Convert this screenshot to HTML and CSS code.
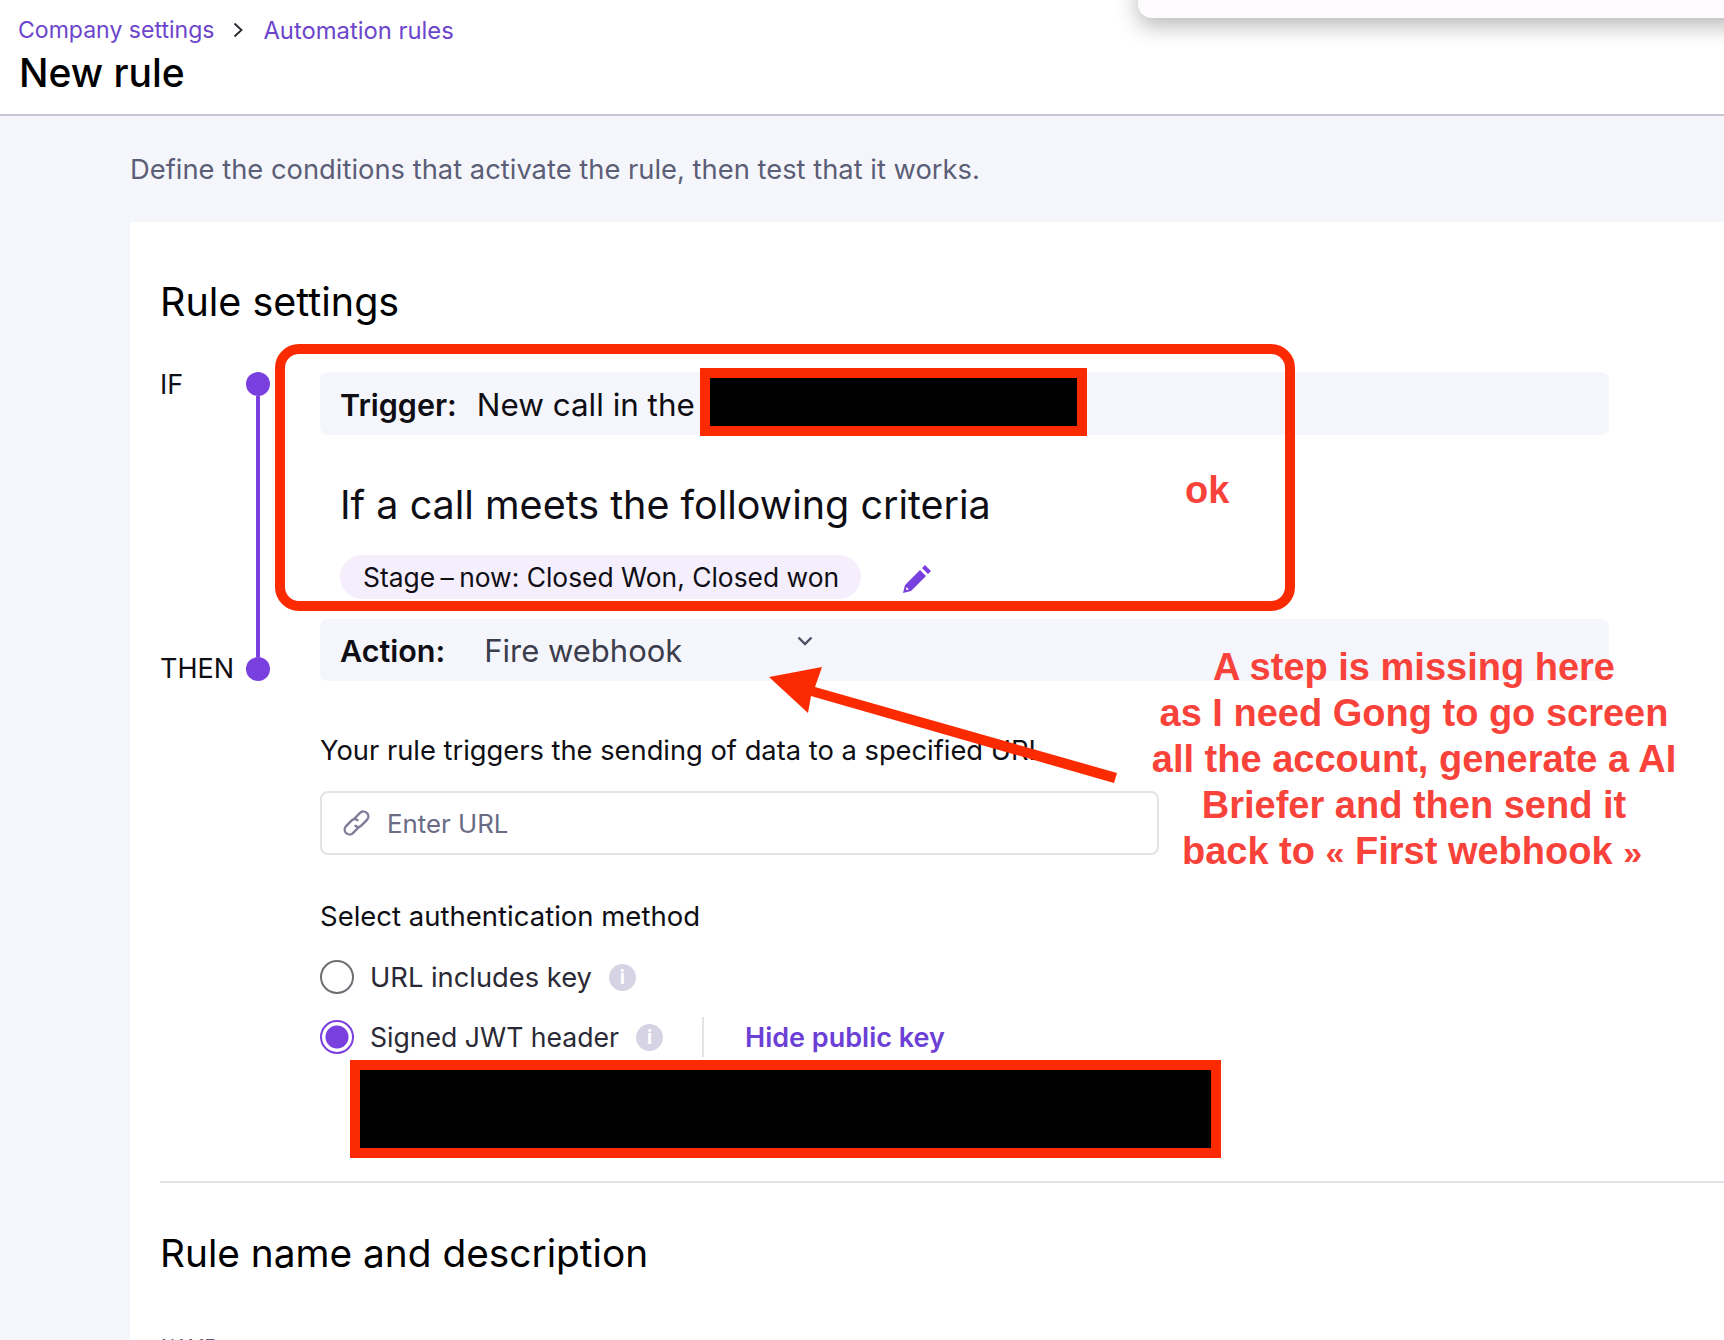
FILE: index.html
```html
<!DOCTYPE html>
<html lang="en">
<head>
<meta charset="utf-8">
<title>New rule</title>
<link rel="stylesheet" href="styles.css">
</head>
<body>
<div class="page">
  <header class="topbar">
    <nav class="crumbs">
      <a class="crumb">Company settings</a>
      <svg class="crumb-sep" viewBox="0 0 12 16" aria-hidden="true"><path d="M2.5 1.5 9.5 8l-7 6.5" fill="none" stroke="#26262e" stroke-width="1.8"/></svg>
      <a class="crumb crumb-current">Automation rules</a>
    </nav>
    <h1 class="page-title">New rule</h1>
  </header>
  <main class="content">
    <p class="intro">Define the conditions that activate the rule, then test that it works.</p>
    <section class="card">
      <h2 class="section-title">Rule settings</h2>
      <div class="rule">
        <div class="timeline">
          <div class="tl-row"><span class="tl-label">IF</span><span class="tl-dot"></span></div>
          <div class="tl-line"></div>
          <div class="tl-row"><span class="tl-label">THEN</span><span class="tl-dot"></span></div>
        </div>
        <div class="rule-body">
          <div class="bar"><b class="bar-key">Trigger:</b><span class="bar-value">New call in the</span></div>
          <h3 class="criteria-title">If a call meets the following criteria</h3>
          <div class="criteria">
            <span class="pill"><span>Stage<span class="dash"> – </span>now: Closed Won, Closed won</span></span>
            <svg class="pencil" viewBox="0 0 28 28" aria-hidden="true"><path d="M22 0 28 6 25 9 19 3ZM17 5 23 11 8 26 0 28 2 20ZM3.500 22 3 25 6 24.500Z" fill="#7a3fdf" fill-rule="evenodd"/></svg>
          </div>
          <div class="bar action"><b class="bar-key">Action:</b><span class="action-value">Fire webhook</span>
            <svg class="chevron" viewBox="0 0 16 10" aria-hidden="true"><path d="M1.500 1.500 8 8l6.500-6.500" fill="none" stroke="#4c5068" stroke-width="2.400"/></svg>
          </div>
          <p class="field-label">Your rule triggers the sending of data to a specified URL</p>
          <div class="url-input">
            <svg class="link-icon" viewBox="0 0 27 26" aria-hidden="true"><g fill="none" stroke="#7f7b99" stroke-width="2.400" stroke-linecap="round"><path d="M11 9 17.300 2.700a4.900 4.900 0 0 1 6.900 6.900L18 15.800a4 4 0 0 1-5.500 0"/><path d="M16 17 9.700 23.300a4.900 4.900 0 0 1-6.900-6.900L9 10.200a4 4 0 0 1 5.500 0"/></g></svg>
            <span class="placeholder">Enter URL</span>
          </div>
          <p class="auth-label">Select authentication method</p>
          <div class="radio-row">
            <span class="radio"></span><span class="radio-text">URL includes key</span><span class="info">i</span>
          </div>
          <div class="radio-row second">
            <span class="radio checked"></span><span class="radio-text">Signed JWT header</span><span class="info">i</span>
            <span class="vsep"></span><a class="hide-key">Hide public key</a>
          </div>
          <div class="key-redact"></div>
        </div>
      </div>
      <hr class="divider">
      <h2 class="section-title lower">Rule name and description</h2>
      <div class="name-label">NAME</div>
    </section>
  </main>
  <div class="popup"></div>
  <div class="redact-trigger"></div>
  <div class="callout-box"></div>
  <div class="note-ok">ok</div>
  <div class="note-step">A step is missing here<br>as I need Gong to go screen<br>all the account, generate a AI<br>Briefer and then send it<br>back to <span class="quote">«</span> First webhook <span class="quote quote-end">»</span></div>
  <svg class="arrow" viewBox="0 0 1724 1340" aria-hidden="true"><path d="M769 677 822 667 815 687 1117 773 1114 783 811 696 808 713Z" fill="#fc2a00"/></svg>
</div>
</body>
</html>
```
FILE: styles.css
```css
* { box-sizing: border-box; }
html, body { margin: 0; height: 100%; }
body { font-family: Inter, "Noto Sans", sans-serif; color: #0e0e14; background: #f5f6fb; overflow: hidden; }
.page { position: relative; width: 1724px; height: 1340px; overflow: hidden; }

.topbar { height: 116px; background: #fff; border-bottom: 2px solid #cbc4d2; padding: 15px 0 0 18px; }
.crumbs { display: flex; align-items: center; height: 30px; }
.crumb { font-size: 23.050px; color: #6c45cc; }
.crumb-current { font-size: 23.800px; }
.crumb-sep { width: 12px; height: 16px; margin: 0 19px 0 18px; }
.page-title { margin: 5px 0 0 1px; font-size: 39px; line-height: 46px; font-weight: 500; color: #000; }

.content { padding: 0 0 0 130px; }
.intro { margin: 0; padding-top: 38px; height: 106px; font-size: 27.350px; line-height: 32px; color: #5b5e76; }
.card { background: #fff; height: 1200px; padding: 55px 0 0 30px; }
.section-title { margin: 0; font-size: 39.500px; line-height: 50px; font-weight: 400; color: #000; }
.section-title.lower { margin-top: 45px; font-size: 38.800px; }

.rule { display: flex; margin-top: 45px; }
.timeline { width: 160px; flex: none; display: flex; flex-direction: column; }
.tl-row { display: flex; justify-content: space-between; align-items: center; width: 110px; height: 24px; }
.tl-label { font-size: 27px; line-height: 24px; }
.tl-row:first-child .tl-label { padding-top: 2px; }
.tl-dot { width: 24px; height: 24px; border-radius: 50%; background: #7a3fdf; }
.tl-line { width: 4px; height: 261px; margin-left: 96px; background: #7a3fdf; }

.rule-body { width: 1289px; }
.bar { display: flex; align-items: center; height: 63px; padding: 2px 0 0 20px; background: #f5f6fb; border-radius: 8px; font-size: 30.500px; }
.bar-key { font-weight: 600; }
.bar-value { margin-left: 20px; font-size: 31.400px; }
.criteria-title { margin: 45px 0 0 20px; font-size: 39.500px; line-height: 50px; font-weight: 400; }
.criteria { display: flex; align-items: center; margin: 25px 0 0 20px; height: 44px; }
.pill { display: flex; align-items: center; width: 521px; height: 44px; padding-left: 23px; border-radius: 22px; background: #f5eefc; font-size: 26.400px; white-space: nowrap; }
.dash { word-spacing: -2px; }
.pencil { width: 28px; height: 28px; margin: 4px 0 0 42px; }
.action { height: 62px; margin-top: 20px; padding-top: 0; }
.action-value { margin-left: 39px; color: #3c3d4c; font-size: 31px; }
.chevron { width: 16px; height: 10px; margin: -18px 0 0 115px; }
.field-label { margin: 54px 0 0; font-size: 27.300px; line-height: 32px; }
.url-input { display: flex; align-items: center; width: 839px; height: 64px; margin-top: 24px; padding-left: 21px; border: 2px solid #e3e3e6; border-radius: 8px; background: #fff; }
.link-icon { width: 27px; height: 26px; flex: none; }
.placeholder { margin-left: 17px; font-size: 25.800px; color: #696c84; }
.auth-label { margin: 45px 0 0; font-size: 27.500px; line-height: 32px; }
.radio-row { display: flex; align-items: center; height: 34px; margin-top: 28px; }
.radio-row.second { margin-top: 26px; }
.radio { width: 34px; height: 34px; flex: none; border: 2px solid #6e6e74; border-radius: 50%; }
.radio.checked { border-color: #7a3fdf; background: radial-gradient(circle, #7a3fdf 0 11px, #fff 12px); }
.radio-text { margin-left: 16px; font-size: 27.300px; color: #2a2a36; }
.second .radio-text { font-size: 26.600px; }
.info { width: 27px; height: 27px; margin-left: 17px; border-radius: 50%; background: #d6d4e4; color: #fff; font-size: 19px; font-weight: 700; line-height: 27px; text-align: center; }
.vsep { width: 2px; height: 40px; margin-left: 39px; background: #e3e3e6; }
.hide-key { margin-left: 41px; font-size: 27px; font-weight: 600; color: #6c3fd6; }
.key-redact { width: 871px; height: 98px; margin: 6px 0 0 30px; background: #000; border: 10px solid #fc2a00; }

.divider { height: 2px; margin: 23px 0 0; border: 0; background: #e3e3e6; }
.name-label { margin: 57px 0 0 1px; font-size: 18.500px; line-height: 22px; color: #5b5e76; }

.popup { position: absolute; left: 1138px; top: -30px; width: 620px; height: 48px; border-radius: 14px; background: #fdfbfe; box-shadow: 0 8px 22px rgba(0,0,0,.28); }
.redact-trigger { position: absolute; left: 700px; top: 368px; width: 387px; height: 68px; background: #000; border: 10px solid #fc2a00; }
.callout-box { position: absolute; left: 275px; top: 344px; width: 1020px; height: 267px; border: 10px solid #fc2a00; border-radius: 24px; }
.arrow { position: absolute; left: 0; top: 0; width: 1724px; height: 1340px; }
.note-ok { position: absolute; left: 1185px; top: 467px; font: 700 38px/46px "Liberation Sans", Arial, sans-serif; color: #f8423a; }
.note-step { position: absolute; left: 1114px; top: 644px; width: 600px; text-align: center; font: 700 38px/46px "Liberation Sans", Arial, sans-serif; color: #f8423a; }
.quote { font-size: 34px; }
.quote-end { margin-right: 4px; }
```
